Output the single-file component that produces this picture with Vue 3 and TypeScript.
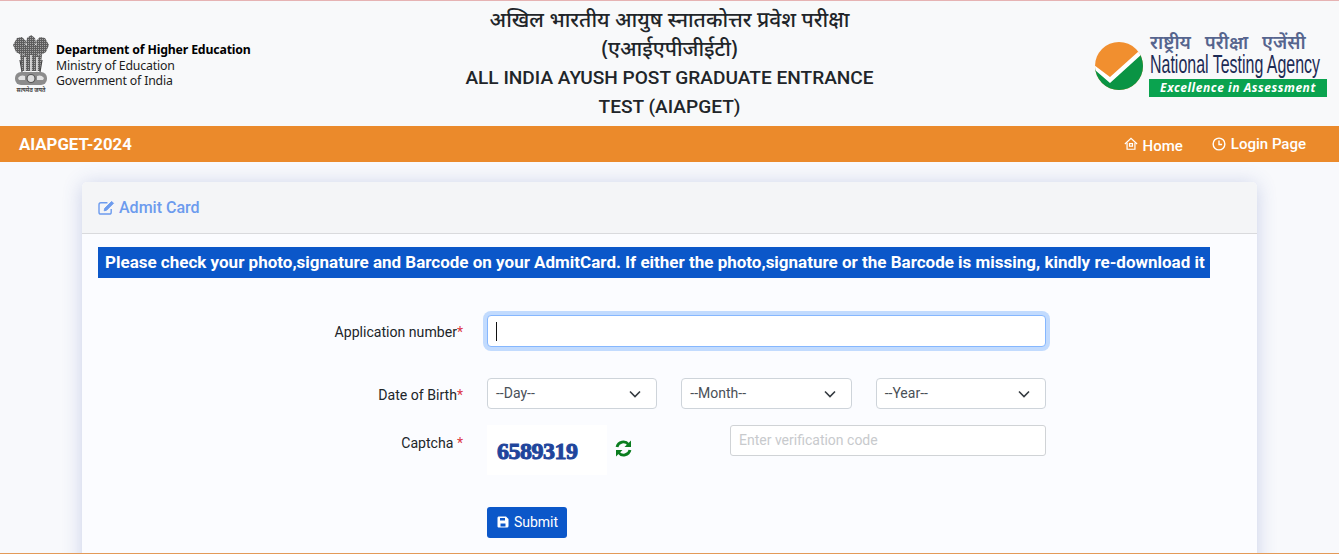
<script setup lang="ts">
const selects: string[] = ['--Day--', '--Month--', '--Year--']
</script>

<template>
  <div class="page">
    <header class="top">
      <div class="dept">
        <svg class="emblem" width="38" height="58" viewBox="0 0 38 58">
          <defs>
            <pattern id="speck" width="2" height="2" patternUnits="userSpaceOnUse">
              <rect width="2" height="2" fill="#5d5d5d" />
              <rect width="1" height="1" fill="#a5a5a5" />
            </pattern>
          </defs>
          <g fill="url(#speck)">
            <path d="M15 3 19 0l4 3 1 5-2 4h-6l-2-4z" />
            <path d="M1 10 5 3l5-1 4 4-1 7 1 6-5 1-5-3z" />
            <path d="M37 10 33 3l-5-1-4 4 1 7-1 6 5 1 5-3z" />
            <path d="M13 10h12l1 8-1 4H13l-1-4z" />
            <path d="M8 20h22l-2 16H10z" />
          </g>
          <path d="M13 22v15M19 20v17M25 22v15" stroke="#e8e8e8" stroke-width="1.600" />
          <path d="M8 25l2 12M30 25l-2 12" stroke="#444" stroke-width="1.200" />
          <rect x="3" y="37" width="32" height="13" rx="6" fill="#8c8c8c" />
          <circle cx="19" cy="43.500" r="4" fill="#ddd" stroke="#555" stroke-width="1.200" />
          <path d="M6 43c2-3 5-3 7-2v4H7zM32 43c-2-3-5-3-7-2v4h6z" fill="#e2e2e2" />
          <text x="19" y="56.500" text-anchor="middle" class="emblem-text">सत्यमेव जयते</text>
        </svg>
        <div class="dept-text">
          <strong>Department of Higher Education</strong>
          <span>Ministry of Education</span>
          <span>Government of India</span>
        </div>
      </div>
      <div class="title">
        <h1>अखिल भारतीय आयुष स्नातकोत्तर प्रवेश परीक्षा<br />(एआईएपीजीईटी)</h1>
        <h2>ALL INDIA AYUSH POST GRADUATE ENTRANCE<br />TEST (AIAPGET)</h2>
      </div>
      <div class="nta">
        <svg class="nta-mark" width="48" height="48" viewBox="0 0 48 48">
          <defs>
            <clipPath id="disc"><circle cx="24" cy="24" r="24" /></clipPath>
          </defs>
          <g clip-path="url(#disc)">
            <rect width="48" height="48" fill="#f18f2f" />
            <path d="M0 26 15 40 46 12h2v36H0z" fill="#0a9444" />
            <path d="M-1 23 15 35 44 9l3 3-32 29L-1 27z" fill="#fff" />
          </g>
        </svg>
        <div class="nta-text">
          <div class="nta-hi">राष्ट्रीय परीक्षा एजेंसी</div>
          <div class="nta-en"><span>National Testing Agency</span></div>
          <div class="nta-tag">Excellence in Assessment</div>
        </div>
      </div>
    </header>

    <nav class="bar">
      <span class="brand">AIAPGET-2024</span>
      <div class="links">
        <a class="link home">
          <svg width="14" height="14" viewBox="0 0 16 16" fill="none" stroke="#fff" stroke-width="1.400">
            <path d="M1 8 8 1.500 15 8" />
            <path d="M3.500 6.500V14h9V6.500" />
            <rect x="6.300" y="7.500" width="3.400" height="3" />
          </svg>
          Home
        </a>
        <a class="link login">
          <svg width="14" height="14" viewBox="0 0 16 16" fill="none" stroke="#fff" stroke-width="1.600">
            <circle cx="8" cy="8" r="6.700" />
            <path d="M8 4v4.500h3.500" />
          </svg>
          Login Page
        </a>
      </div>
    </nav>

    <main class="content">
      <section class="card">
        <div class="card-head">
          <svg width="17" height="15" viewBox="0 0 18 16" fill="none" stroke="#6c9bee" stroke-width="1.500">
            <path d="M14 9.500V13a2 2 0 0 1-2 2H3a2 2 0 0 1-2-2V5a2 2 0 0 1 2-2h7" />
            <path d="M7 9 6.500 11.500 9 11l7.500-7.500-2-2z" fill="#6c9bee" stroke-width="1" />
          </svg>
          <span>Admit Card</span>
        </div>
        <div class="card-body">
          <p class="notice">Please check your photo,signature and Barcode on your AdmitCard. If either the photo,signature or the Barcode is missing, kindly re-download it</p>
          <form class="form" @submit.prevent>
            <div class="row row-app">
              <label>Application number<em>*</em></label>
              <div class="fake-input"><i class="caret"></i></div>
            </div>
            <div class="row row-dob">
              <label>Date of Birth<em>*</em></label>
              <div class="selects">
                <div class="select" v-for="t in selects" :key="t">
                  <span>{{ t }}</span>
                  <svg width="12" height="8" viewBox="0 0 12 8" fill="none" stroke="#343a40" stroke-width="1.600">
                    <path d="M1 1.500 6 6.500 11 1.500" />
                  </svg>
                </div>
              </div>
            </div>
            <div class="row row-cap">
              <label>Captcha <em>*</em></label>
              <div class="captcha-line">
                <div class="captcha">6589319</div>
                <svg class="refresh" width="17" height="17" viewBox="0 0 17 17" fill="none" stroke="#0a7d1f" stroke-width="2.800">
                  <path d="M2 7a6.500 6.500 0 0 1 11.500-2.500" />
                  <path d="M16 0.500v6.500H9.500z" fill="#0a7d1f" stroke="none" />
                  <path d="M15 10a6.500 6.500 0 0 1-11.500 2.500" />
                  <path d="M1 16.500V10h6.500z" fill="#0a7d1f" stroke="none" />
                </svg>
                <div class="verify">Enter verification code</div>
              </div>
            </div>
            <div class="row row-sub">
              <span></span>
              <div>
                <button class="submit" type="submit">
                  <svg width="12" height="12" viewBox="0 0 12 12">
                    <path fill-rule="evenodd" fill="#fff" d="M1.500 0.500h7.500l2.500 2.500v7a1.500 1.500 0 0 1-1.500 1.500h-8.500a1.500 1.500 0 0 1-1-1V2a1.500 1.500 0 0 1 1-1.500zM3 2v2.500h5V2zM3.500 7.500v3h5v-3z" />
                  </svg>
                  Submit
                </button>
              </div>
            </div>
          </form>
        </div>
      </section>
    </main>
    <div class="edge"></div>
  </div>
</template>

<style>
html, body { margin: 0; height: 554px; overflow: hidden; }
</style>

<style scoped>
.page {
  height: 554px;
  overflow: hidden;
  background: #f8f9fc;
  font-family: Roboto, "Noto Sans", sans-serif;
  color: #212529;
  box-sizing: border-box;
  display: flex;
  flex-direction: column;
}
.top {
  height: 125px;
  flex: none;
  border-top: 1px solid #e6b3b3;
  background: #f8f9fa;
  display: grid;
  grid-template-columns: 1fr 500px 1fr;
}
.dept {
  display: flex;
  align-items: center;
  gap: 6px;
  padding: 4px 0 0 12px;
}
.emblem { margin-top: -4px; }
.emblem-text { font: 700 5.500px "Noto Sans", sans-serif; fill: #444; }
.dept-text {
  display: flex;
  flex-direction: column;
  font: 12.300px/15.500px "Noto Sans", "Open Sans", sans-serif;
  color: #1c1c1c;
  letter-spacing: -0.170px;
}
.dept-text strong { color: #000; font-weight: 700; }
.title { text-align: center; color: #212529; }
.title h1, .title h2 { margin: 0; font-weight: 500; line-height: 29px; }
.title h1 { font: 500 21px/29px "Noto Sans", Roboto, sans-serif; padding-top: 4px; }
.title h2 { font-size: 19.100px; }
.nta {
  display: flex;
  justify-content: flex-end;
  align-items: flex-start;
  gap: 6px;
  padding: 32px 12px 0 0;
}
.nta-mark { margin-top: 9px; }
.nta-text { width: 178px; }
.nta-hi {
  font: 600 18.500px/17px "Noto Sans", sans-serif;
  color: #56658e;
  word-spacing: 9px;
  white-space: nowrap;
  padding-left: 1px;
}
.nta-en {
  height: 27px;
  margin-top: 1px;
  color: #1c2b55;
  font: 400 24px/27px "Liberation Sans", sans-serif;
  white-space: nowrap;
  padding-left: 1px;
}
.nta-en span { display: inline-block; transform: scale(0.665, 1.04); transform-origin: left center; }
.nta-tag {
  margin-top: 1px;
  background: #0aa34f;
  color: #fff;
  font: italic 700 12px/18px "Noto Sans", sans-serif;
  letter-spacing: 0.550px;
  text-align: center;
  white-space: nowrap;
}
.bar {
  height: 36px;
  flex: none;
  background: #eb8a2b;
  color: #fff;
  display: flex;
  align-items: center;
  justify-content: space-between;
  padding: 0 33px 0 19px;
  font-weight: 700;
}
.brand { font-size: 16.800px; }
.links { display: flex; gap: 29px; font-size: 15px; font-weight: 500; }
.link { display: flex; align-items: center; gap: 5px; }
.home { padding-top: 3px; }
.home svg { margin-top: -4px; }
.content {
  flex: 1;
  min-height: 0;
  overflow: hidden;
  background: #f8f9fc;
  padding: 20px 82px 0;
}
.edge { height: 1px; flex: none; background: #e39a58; }
.card {
  height: 420px;
  background: #fbfcff;
  border-radius: 5px 5px 0 0;
  box-shadow: 0 2px 20px rgba(60, 85, 170, 0.24);
}
.card-head {
  height: 51px;
  background: #f4f5f7;
  border-bottom: 1px solid #d9dadd;
  border-radius: 5px 5px 0 0;
  display: flex;
  align-items: center;
  gap: 4px;
  padding-left: 16px;
  font-size: 16px;
  font-weight: 500;
  color: #6c9bee;
}
.card-body { padding: 13px 16px 0; }
.notice {
  margin: 0;
  width: 1112px;
  height: 31px;
  box-sizing: border-box;
  background: #0b57c9;
  color: #fff;
  font-size: 17px;
  font-weight: 700;
  line-height: 31px;
  padding-left: 7px;
  white-space: nowrap;
  overflow: hidden;
}
.form { margin-top: 37px; }
.row {
  display: grid;
  grid-template-columns: 365px 559px;
  column-gap: 24px;
  font-size: 14.100px;
}
.row label { text-align: right; color: #212529; }
.row em { color: #dc3545; font-style: normal; }
.row-app { height: 32px; }
.row-app label { line-height: 34px; }
.row-dob { margin-top: 31px; height: 31px; }
.row-dob label { line-height: 34px; }
.row-cap { margin-top: 16px; height: 50px; }
.row-cap label { line-height: 36px; }
.row-sub { margin-top: 32px; }
.fake-input {
  height: 30px;
  border: 1px solid #86b7fe;
  border-radius: 4px;
  background: #fff;
  box-shadow: 0 0 0 4px #c2dbfe;
  display: flex;
  align-items: center;
  padding-left: 8px;
}
.caret { width: 1px; height: 19px; background: #111; }
.selects {
  display: grid;
  grid-template-columns: repeat(3, 1fr);
  gap: 24px;
}
.select {
  height: 29px;
  border: 1px solid #ced4da;
  border-radius: 4px;
  background: #fff;
  display: flex;
  align-items: center;
  justify-content: space-between;
  padding: 0 15px 0 8px;
  font-size: 14px;
  color: #495057;
}
.select span { margin-top: -2px; }
.captcha-line { display: flex; align-items: flex-start; }
.captcha {
  width: 120px;
  height: 50px;
  background: #fff;
  box-sizing: border-box;
  padding-left: 10px;
  font: 700 24px/52px "Liberation Serif", serif;
  -webkit-text-stroke: 1px #1f459c;
  letter-spacing: -0.500px;
  color: #1f459c;
  white-space: nowrap;
}
.refresh { margin: 15px 0 0 8px; }
.verify {
  margin-left: auto;
  width: 316px;
  height: 31px;
  box-sizing: border-box;
  border: 1px solid #d0d3d6;
  border-radius: 3px;
  background: #fff;
  color: #c8cacd;
  font-size: 14px;
  line-height: 29px;
  padding-left: 8px;
}
.submit {
  width: 80px;
  height: 31px;
  background: #0b57c9;
  color: #fff;
  border: 0;
  border-radius: 3px;
  font: 400 14px Roboto, sans-serif;
  display: flex;
  align-items: center;
  justify-content: center;
  gap: 5px;
  padding: 0 0 1px 1px;
}
</style>
